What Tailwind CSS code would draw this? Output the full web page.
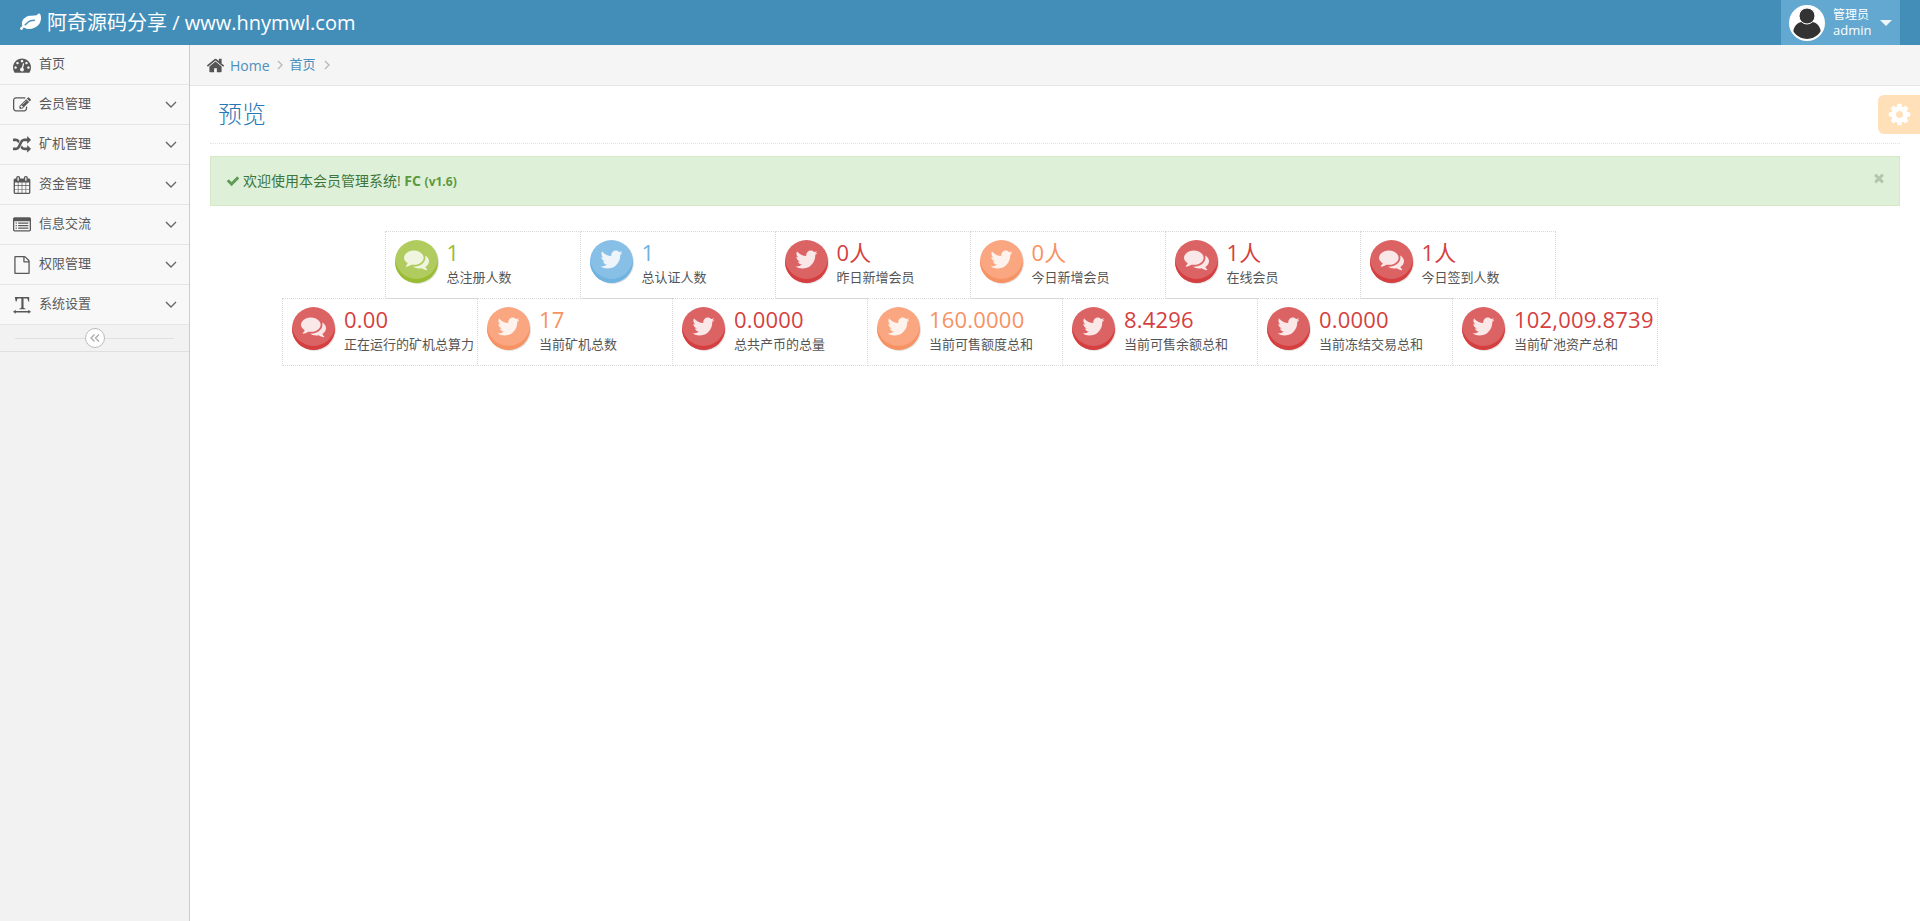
<!DOCTYPE html>
<html lang="zh">
<head>
<meta charset="utf-8">
<title>预览</title>
<script src="https://cdn.jsdelivr.net/npm/@tailwindcss/browser@4"></script>
</head>
<body class="font-['Open_Sans','Noto_Sans_CJK_SC',sans-serif] text-[13px] text-[#393939] bg-white">
<svg class="hidden" xmlns="http://www.w3.org/2000/svg">
<defs>
<symbol id="twitter" viewBox="0 0 1792 1792"><path fill="currentColor" d="M1684 408q-67 98-162 167 1 14 1 42 0 130-38 259.500t-115.500 248.500-184.500 210.500-258 146-323 54.500q-271 0-496-145 35 4 78 4 225 0 401-138-105-2-188-64.500t-114-159.500q33 5 61 5 43 0 85-11-112-23-185.500-111.500t-73.500-205.500v-4q68 38 146 41-66-44-105-115t-39-154q0-88 44-163 121 149 294.500 238.500t371.500 99.500q-8-38-8-74 0-134 94.500-228.500t228.500-94.500q140 0 236 102 109-21 205-78-37 115-142 178 92-10 184-50z"/></symbol>
<symbol id="comments" viewBox="0 0 1792 1792"><path fill="currentColor" d="M1408 768q0 139-94 257t-256.500 186.500-353.500 68.500q-86 0-176-16-124 88-278 128-36 9-86 16h-3q-11 0-20.500-8t-11.500-21q-1-3-1-6.500t.5-6.500 2-6l2.500-5 3.500-5.500 4-5 4.500-5 4-4.500q5-6 23-25t26-29.500 22.500-29 25-38.500 20.500-44q-124-72-195-177t-71-224q0-139 94-257t256.500-186.500 353.500-68.500 353.500 68.500 256.500 186.500 94 257zm384 256q0 120-71 224.500t-195 176.500q10 24 20.500 44t25 38.500 22.500 29 26 29.500 23 25q1 1 4 4.500t4.500 5 4 5 3.500 5.500l2.500 5 2 6 .5 6.500-1 6.500q-3 14-13 22t-22 7q-50-7-86-16-154-40-278-128-90 16-176 16-271 0-472-132 58 4 88 4 161 0 309-45t264-129q125-92 192-212t67-254q0-77-23-152 129 71 204 178t75 230z"/></symbol>
<symbol id="home" viewBox="0 0 1792 1792"><path fill="currentColor" d="M1472 992v480q0 26-19 45t-45 19h-384v-384h-256v384h-384q-26 0-45-19t-19-45v-480q0-1 .5-3t.5-3l575-474 575 474q1 2 1 6zm223-69l-62 74q-8 9-21 11h-3q-13 0-21-7l-692-577-692 577q-12 8-24 7-13-2-21-11l-62-74q-8-10-7-23.500t11-21.500l719-599q32-26 76-26t76 26l244 204v-195q0-14 9-23t23-9h192q14 0 23 9t9 23v408l219 182q10 8 11 21.500t-7 23.500z"/></symbol>
<symbol id="dash" viewBox="0 0 1792 1792"><path fill="currentColor" d="M384 1152q0-53-37.500-90.500t-90.500-37.500-90.500 37.500-37.500 90.500 37.500 90.500 90.500 37.500 90.500-37.500 37.500-90.500zm192-448q0-53-37.500-90.500t-90.500-37.500-90.500 37.500-37.500 90.500 37.500 90.500 90.500 37.500 90.500-37.500 37.500-90.500zm428 481l101-382q6-26-7.500-48.500t-38.500-29.500-48 6.500-30 39.500l-101 382q-60 5-107 43.500t-63 98.500q-20 77 20 146t117 89 146-20 89-117q16-60-6-117t-72-91zm660-33q0-53-37.500-90.500t-90.500-37.500-90.500 37.500-37.500 90.500 37.500 90.500 90.500 37.500 90.500-37.500 37.500-90.500zm-640-640q0-53-37.500-90.500t-90.500-37.500-90.500 37.500-37.500 90.500 37.500 90.500 90.500 37.500 90.500-37.500 37.500-90.500zm448 192q0-53-37.500-90.500t-90.500-37.500-90.500 37.500-37.500 90.500 37.500 90.500 90.500 37.500 90.500-37.500 37.500-90.500zm320 448q0 261-141 483-19 29-54 29h-1402q-35 0-54-29-141-221-141-483 0-182 71-348t191-286 286-191 348-71 348 71 286 191 191 286 71 348z"/></symbol>
<symbol id="cog" viewBox="0 0 1792 1792"><path fill="currentColor" d="M1152 896q0-106-75-181t-181-75-181 75-75 181 75 181 181 75 181-75 75-181zm512-109v222q0 12-8 23t-20 13l-185 28q-19 54-39 91 35 50 107 138 10 12 10 25t-9 23q-27 37-99 108t-94 71q-12 0-26-9l-138-108q-44 23-91 38-16 136-29 186-7 28-36 28h-222q-14 0-24.500-8.500t-11.500-21.500l-28-184q-49-16-90-37l-141 107q-10 9-25 9-14 0-25-11-126-114-165-168-7-10-7-23 0-12 8-23 15-21 51-66.500t54-70.500q-27-50-41-99l-183-27q-13-2-21-12.500t-8-23.500v-222q0-12 8-23t19-13l186-28q14-46 39-92-40-57-107-138-10-12-10-24 0-10 9-23 26-36 98.500-107.500t94.500-71.500q13 0 26 10l138 107q44-23 91-38 16-136 29-186 7-28 36-28h222q14 0 24.500 8.500t11.500 21.500l28 184q49 16 90 37l142-107q9-9 24-9 13 0 25 10 129 119 165 170 7 8 7 22 0 12-8 23-15 21-51 66.500t-54 70.500q26 50 41 98l183 28q13 2 21 12.500t8 23.500z"/></symbol>
<symbol id="check" viewBox="0 0 1792 1792"><path fill="currentColor" d="M1671 566q0 40-28 68l-724 724-136 136q-28 28-68 28t-68-28l-136-136-362-362q-28-28-28-68t28-68l136-136q28-28 68-28t68 28l294 295 656-657q28-28 68-28t68 28l136 136q28 28 28 68z"/></symbol>
<symbol id="times" viewBox="0 0 1792 1792"><path fill="currentColor" d="M1490 1322q0 40-28 68l-136 136q-28 28-68 28t-68-28l-294-294-294 294q-28 28-68 28t-68-28l-136-136q-28-28-28-68t28-68l294-294-294-294q-28-28-28-68t28-68l136-136q28-28 68-28t68 28l294 294 294-294q28-28 68-28t68 28l136 136q28 28 28 68t-28 68l-294 294 294 294q28 28 28 68z"/></symbol>
<symbol id="random" viewBox="0 0 1792 1792"><path fill="currentColor" d="M666 481q-60 92-137 273-22-45-37-72.500t-40.500-63.500-51-56.500-63-35-81.500-14.500h-224q-14 0-23-9t-9-23v-192q0-14 9-23t23-9h224q250 0 410 225zm1126 799q0 14-9 23l-320 320q-9 9-23 9-13 0-22.500-9.500t-9.500-22.500v-192q-32 0-85 .5t-81 1-73-1-71-5-64-10.500-63-18.500-58-28.500-59-40-55-53.500-56-69.500q59-93 136-273 22 45 37 72.500t40.500 63.500 51 56.500 63 35 81.500 14.500h256v-192q0-14 9-23t23-9q12 0 24 10l319 319q9 9 9 23zm0-896q0 14-9 23l-320 320q-9 9-23 9-13 0-22.500-9.500t-9.500-22.500v-192h-256q-48 0-87 15t-69 45-51 61.500-45 77.500q-32 62-78 171-29 66-49.500 111t-54 105-64 100-74 83-90 68.500-106.500 42-128 16.500h-224q-14 0-23-9t-9-23v-192q0-14 9-23t23-9h224q48 0 87-15t69-45 51-61.500 45-77.500q32-62 78-171 29-66 49.500-111t54-105 64-100 74-83 90-68.500 106.500-42 128-16.500h256v-192q0-14 9-23t23-9q12 0 24 10l319 319q9 9 9 23z"/></symbol>
<symbol id="leaf" viewBox="0 0 1792 1792"><path fill="currentColor" d="M1280 704q0-26-19-45t-45-19q-172 0-318 49.500t-259.500 134-235.500 219.500q-19 21-19 45 0 26 19 45t45 19q24 0 45-19 27-24 74-71t67-66q137-124 268.500-176t313.500-52q26 0 45-19t19-45zm512-198q0 95-20 193-46 224-184.500 383t-357.500 268q-214 108-438 108-148 0-286-47-15-5-88-42t-96-37q-16 0-39.500 32t-45 70-52.500 70-60 32q-30 0-51-11t-31-24-27-42q-2-4-6-11t-5.500-10-3-9.500-1.500-13.500q0-35 31-73.500t68-65.500 68-56 31-48q0-4-14-38t-16-44q-9-51-9-104 0-115 43.500-220t119-184.500 170.500-139 204-95.500q55-18 145-25.500t179.500-9 178.500-6 163.500-24 113.500-56.500l29.500-29.500 29.500-28 27-20 36.500-16 43.500-4.500q39 0 70.500 46t47.500 112 24 124 8 96z"/></symbol>
<symbol id="edit" viewBox="0 0 1792 1792"><path fill="currentColor" d="M888 1184l116-116-152-152-116 116v56h96v96h56zm440-720q-16-16-33 1l-350 350q-17 17-1 33t33-1l350-350q17-17 1-33zm80 594v190q0 119-84.500 203.500t-203.500 84.500h-832q-119 0-203.500-84.500t-84.500-203.500v-832q0-119 84.500-203.500t203.500-84.500h832q63 0 117 25 15 7 18 23 3 17-9 29l-49 49q-14 14-32 8-23-6-45-6h-832q-66 0-113 47t-47 113v832q0 66 47 113t113 47h832q66 0 113-47t47-113v-126q0-13 9-22l64-64q15-15 35-7t20 29zm-96-738l288 288-672 672h-288v-288zm444 132l-92 92-288-288 92-92q28-28 68-28t68 28l152 152q28 28 28 68t-28 68z"/></symbol>
<symbol id="calendar" viewBox="0 0 1792 1792"><path fill="currentColor" d="M192 1664h288v-288h-288v288zm352 0h320v-288h-320v288zm-352-352h288v-320h-288v320zm352 0h320v-320h-320v320zm-352-384h288v-288h-288v288zm736 736h320v-288h-320v288zm-384-736h320v-288h-320v288zm768 736h288v-288h-288v288zm-384-352h320v-320h-320v320zm-352-864v-288q0-13-9.500-22.500t-22.500-9.500h-64q-13 0-22.500 9.500t-9.500 22.500v288q0 13 9.500 22.500t22.500 9.500h64q13 0 22.500-9.500t9.500-22.500zm736 864h288v-320h-288v320zm-384-384h320v-288h-320v288zm384 0h288v-288h-288v288zm32-480v-288q0-13-9.500-22.500t-22.500-9.500h-64q-13 0-22.500 9.500t-9.500 22.500v288q0 13 9.500 22.500t22.500 9.500h64q13 0 22.500-9.500t9.500-22.500zm384-64v1280q0 52-38 90t-90 38h-1408q-52 0-90-38t-38-90v-1280q0-52 38-90t90-38h128v-96q0-66 47-113t113-47h64q66 0 113 47t47 113v96h384v-96q0-66 47-113t113-47h64q66 0 113 47t47 113v96h128q52 0 90 38t38 90z"/></symbol>
<symbol id="listalt" viewBox="0 0 1792 1792"><path fill="currentColor" d="M384 1184v64q0 13-9.500 22.500t-22.500 9.500h-64q-13 0-22.500-9.500t-9.500-22.500v-64q0-13 9.500-22.500t22.500-9.500h64q13 0 22.500 9.500t9.500 22.500zm0-256v64q0 13-9.500 22.500t-22.500 9.500h-64q-13 0-22.500-9.500t-9.500-22.500v-64q0-13 9.500-22.500t22.500-9.500h64q13 0 22.500 9.500t9.500 22.500zm0-256v64q0 13-9.500 22.500t-22.500 9.500h-64q-13 0-22.500-9.500t-9.500-22.500v-64q0-13 9.500-22.500t22.500-9.500h64q13 0 22.500 9.500t9.500 22.500zm1152 512v64q0 13-9.500 22.500t-22.500 9.500h-960q-13 0-22.500-9.500t-9.500-22.500v-64q0-13 9.500-22.500t22.500-9.500h960q13 0 22.500 9.500t9.500 22.500zm0-256v64q0 13-9.500 22.500t-22.500 9.500h-960q-13 0-22.500-9.500t-9.500-22.500v-64q0-13 9.500-22.500t22.500-9.500h960q13 0 22.500 9.500t9.500 22.500zm0-256v64q0 13-9.500 22.500t-22.500 9.500h-960q-13 0-22.500-9.500t-9.500-22.500v-64q0-13 9.500-22.500t22.500-9.500h960q13 0 22.500 9.500t9.500 22.500zm128 704v-832q0-13-9.500-22.500t-22.500-9.500h-1472q-13 0-22.500 9.500t-9.500 22.500v832q0 13 9.500 22.500t22.500 9.500h1472q13 0 22.500-9.500t9.500-22.500zm128-1088v1088q0 66-47 113t-113 47h-1472q-66 0-113-47t-47-113v-1088q0-66 47-113t113-47h1472q66 0 113 47t47 113z"/></symbol>
<symbol id="file" viewBox="0 0 1792 1792"><path fill="currentColor" d="M1596 380q28 28 48 76t20 88v1152q0 40-28 68t-68 28h-1344q-40 0-68-28t-28-68v-1600q0-40 28-68t68-28h896q40 0 88 20t76 48zm-444-244v376h376q-10-29-22-41l-313-313q-12-12-41-22zm384 1528v-1024h-416q-40 0-68-28t-28-68v-416h-768v1536h1280z"/></symbol>
<symbol id="textw" viewBox="0 0 20 20"><path fill="currentColor" d="M2 1h16v5h-1l-.8-2.700q-.3-.6-1-.6h-3.500v9.800q0 .8.8 1l1.300.3v.8H7.200v-.8l1.300-.3q.8-.2.8-1V2.700H5.800q-.7 0-1 .6L4 6H3zM0 17.500l3-2.300v1.600h14v-1.600l3 2.300-3 2.300v-1.600H3v1.600z"/></symbol>
<symbol id="chev" viewBox="0 0 12 8"><path fill="none" stroke="currentColor" stroke-width="1.400" d="M1 1l5 5 5-5"/></symbol>
<symbol id="crumb" viewBox="0 0 6 10"><path fill="none" stroke="currentColor" stroke-width="1.200" d="M1 1l4 4-4 4"/></symbol>
</defs>
</svg>

<div class="flex h-screen flex-col overflow-hidden">
  <header class="flex h-[45px] flex-none items-center justify-between bg-[#438eb9] pr-5 text-white">
    <div class="flex items-center pl-5 text-[20px]">
      <svg class="mr-[6px] h-[21px] w-[21px]"><use href="#leaf"/></svg>
      <span>阿奇源码分享 / www.hnymwl.com</span>
    </div>
    <div class="flex h-[45px] w-[119px] items-center bg-[#62a8d1] pl-2">
      <div class="flex h-9 w-9 flex-none items-end justify-center overflow-hidden rounded-full border-2 border-white bg-white">
        <svg viewBox="0 0 32 32" class="h-8 w-8"><path fill="#333" d="M2 27c0-8 5-12 9-12h10c4 0 9 4 9 12 0 2-6 5-14 5S2 29 2 27z"/><circle cx="16" cy="9" r="8" fill="#333" stroke="#fff" stroke-width="1"/></svg>
      </div>
      <div class="ml-2 flex flex-col">
        <span class="text-[12px] leading-[15px]">管理员</span>
        <span class="text-[13px] leading-[16px]">admin</span>
      </div>
      <div class="ml-[9px] h-0 w-0 border-x-[6px] border-t-[6px] border-x-transparent border-t-white/90"></div>
    </div>
  </header>

  <div class="flex min-h-0 flex-1">
    <aside class="flex w-[190px] flex-none flex-col border-r border-[#ccc] bg-[#f2f2f2] text-[#585858]">
      <nav class="flex flex-col">
        <a class="flex h-10 items-center border-b border-[#e5e5e5] bg-[#f8f8f8] pl-[13px] pr-[12px]"><svg class="h-[18px] w-[18px] flex-none"><use href="#dash"/></svg><span class="-mt-px ml-2 flex-1">首页</span></a>
        <a class="flex h-10 items-center border-b border-[#e5e5e5] bg-[#f8f8f8] pl-[13px] pr-[12px]"><svg class="h-[18px] w-[18px] flex-none"><use href="#edit"/></svg><span class="-mt-px ml-2 flex-1">会员管理</span><svg class="h-2 w-3 text-[#666]"><use href="#chev"/></svg></a>
        <a class="flex h-10 items-center border-b border-[#e5e5e5] bg-[#f8f8f8] pl-[13px] pr-[12px]"><svg class="h-[18px] w-[18px] flex-none"><use href="#random"/></svg><span class="-mt-px ml-2 flex-1">矿机管理</span><svg class="h-2 w-3 text-[#666]"><use href="#chev"/></svg></a>
        <a class="flex h-10 items-center border-b border-[#e5e5e5] bg-[#f8f8f8] pl-[13px] pr-[12px]"><svg class="h-[18px] w-[18px] flex-none"><use href="#calendar"/></svg><span class="-mt-px ml-2 flex-1">资金管理</span><svg class="h-2 w-3 text-[#666]"><use href="#chev"/></svg></a>
        <a class="flex h-10 items-center border-b border-[#e5e5e5] bg-[#f8f8f8] pl-[13px] pr-[12px]"><svg class="h-[18px] w-[18px] flex-none"><use href="#listalt"/></svg><span class="-mt-px ml-2 flex-1">信息交流</span><svg class="h-2 w-3 text-[#666]"><use href="#chev"/></svg></a>
        <a class="flex h-10 items-center border-b border-[#e5e5e5] bg-[#f8f8f8] pl-[13px] pr-[12px]"><svg class="h-[18px] w-[18px] flex-none"><use href="#file"/></svg><span class="-mt-px ml-2 flex-1">权限管理</span><svg class="h-2 w-3 text-[#666]"><use href="#chev"/></svg></a>
        <a class="flex h-10 items-center border-b border-[#e5e5e5] bg-[#f8f8f8] pl-[13px] pr-[12px]"><svg class="h-[18px] w-[18px] flex-none"><use href="#textw"/></svg><span class="-mt-px ml-2 flex-1">系统设置</span><svg class="h-2 w-3 text-[#666]"><use href="#chev"/></svg></a>
      </nav>
      <div class="relative flex h-[27px] items-center border-b border-[#e0e0e0] px-[15px]">
        <div class="h-px flex-1 bg-[#e0e0e0]"></div>
        <div class="absolute left-[85px] top-[3px] flex h-5 w-5 items-center justify-center rounded-full border border-[#bbb] bg-white text-[#aaa]">
          <svg viewBox="0 0 10 10" class="h-[10px] w-[10px]"><path fill="none" stroke="currentColor" stroke-width="1.300" d="M4.500 1.500L1 5l3.500 3.500M9 1.500L5.500 5 9 8.500"/></svg>
        </div>
      </div>
    </aside>

    <main class="relative min-w-0 flex-1">
      <div class="flex h-[41px] items-center border-b border-[#e5e5e5] bg-[#f5f5f5] pl-[16px] text-[#4c8fbd]">
        <svg class="h-[19px] w-[19px] text-[#555]"><use href="#home"/></svg>
        <span class="ml-[5px] text-[14px]">Home</span>
        <svg class="ml-[7px] h-[10px] w-[6px] text-[#b2b6bf]"><use href="#crumb"/></svg>
        <span class="ml-[7px]">首页</span>
        <svg class="ml-[8px] h-[10px] w-[6px] text-[#b2b6bf]"><use href="#crumb"/></svg>
      </div>

      <div class="mx-5 flex h-[58px] items-center border-b border-dotted border-[#e2e2e2] pl-2">
        <h1 class="-mt-px text-[24px] font-light leading-none text-[#2679b5]">预览</h1>
      </div>

      <div class="absolute right-0 top-[50px] flex h-[39px] w-[42px] items-center justify-center rounded-l-md bg-[#ffe0b8]">
        <svg class="h-[25px] w-[25px] text-white"><use href="#cog"/></svg>
      </div>

      <div class="relative mx-5 mt-3 flex h-[50px] items-center border border-[#d6e9c6] bg-[#dff0d8] pl-[15px] text-[14px] text-[#3c763d]">
        <svg class="mr-[3px] h-[14px] w-[14px] text-[#629b58]"><use href="#check"/></svg>
        <p class="-mt-px">欢迎使用本会员管理系统! <strong class="text-[14px] font-bold text-[#5b9a3f]">FC</strong> <small class="text-[12px] font-bold text-[#5b9a3f]">(v1.6)</small></p>
        <svg class="absolute right-[13px] top-[14px] h-[14px] w-[14px] text-[#b4c7ae]"><use href="#times"/></svg>
      </div>

      <div class="mt-[25px] flex w-[1560px] flex-col items-center">
        <div class="flex">
          <div class="flex h-[68px] w-[196px] flex-none items-start border border-dotted border-[#d8d8d8] pl-[9px] pt-2">
            <div class="flex h-[43px] w-[43px] flex-none items-center justify-center rounded-full bg-[#b0cc5e] text-white/80 shadow-[inset_0_-4px_0_#9abc32,1px_1px_0_rgba(0,0,0,0.12)]"><svg class="-mt-[4px] h-[25px] w-[25px]"><use href="#comments"/></svg></div>
            <div class="-mt-px ml-[9px] flex flex-col"><span class="text-[22px] leading-[26px] tracking-[0.2px] text-[#9abc32]">1</span><span class="mt-[3px] text-[13px] leading-[18px] text-[#555]">总注册人数</span></div>
          </div>
          <div class="-ml-px flex h-[68px] w-[196px] flex-none items-start border border-dotted border-[#d8d8d8] pl-[9px] pt-2">
            <div class="flex h-[43px] w-[43px] flex-none items-center justify-center rounded-full bg-[#88bfe6] text-white/85 shadow-[inset_0_-4px_0_#6fb3e0,1px_1px_0_rgba(0,0,0,0.12)]"><svg class="-mt-[5px] h-[25px] w-[25px]"><use href="#twitter"/></svg></div>
            <div class="-mt-px ml-[9px] flex flex-col"><span class="text-[22px] leading-[26px] tracking-[0.2px] text-[#6fb3e0]">1</span><span class="mt-[3px] text-[13px] leading-[18px] text-[#555]">总认证人数</span></div>
          </div>
          <div class="-ml-px flex h-[68px] w-[196px] flex-none items-start border border-dotted border-[#d8d8d8] pl-[9px] pt-2">
            <div class="flex h-[43px] w-[43px] flex-none items-center justify-center rounded-full bg-[#dc6364] text-white/85 shadow-[inset_0_-4px_0_#d53f40,1px_1px_0_rgba(0,0,0,0.12)]"><svg class="-mt-[5px] h-[25px] w-[25px]"><use href="#twitter"/></svg></div>
            <div class="-mt-px ml-[9px] flex flex-col"><span class="text-[22px] leading-[26px] tracking-[0.2px] text-[#d53f40]">0人</span><span class="mt-[3px] text-[13px] leading-[18px] text-[#555]">昨日新增会员</span></div>
          </div>
          <div class="-ml-px flex h-[68px] w-[196px] flex-none items-start border border-dotted border-[#d8d8d8] pl-[9px] pt-2">
            <div class="flex h-[43px] w-[43px] flex-none items-center justify-center rounded-full bg-[#f9a681] text-white/85 shadow-[inset_0_-4px_0_#f79263,1px_1px_0_rgba(0,0,0,0.12)]"><svg class="-mt-[5px] h-[25px] w-[25px]"><use href="#twitter"/></svg></div>
            <div class="-mt-px ml-[9px] flex flex-col"><span class="text-[22px] leading-[26px] tracking-[0.2px] text-[#f79263]">0人</span><span class="mt-[3px] text-[13px] leading-[18px] text-[#555]">今日新增会员</span></div>
          </div>
          <div class="-ml-px flex h-[68px] w-[196px] flex-none items-start border border-dotted border-[#d8d8d8] pl-[9px] pt-2">
            <div class="flex h-[43px] w-[43px] flex-none items-center justify-center rounded-full bg-[#dc6364] text-white/85 shadow-[inset_0_-4px_0_#d53f40,1px_1px_0_rgba(0,0,0,0.12)]"><svg class="-mt-[4px] h-[25px] w-[25px]"><use href="#comments"/></svg></div>
            <div class="-mt-px ml-[9px] flex flex-col"><span class="text-[22px] leading-[26px] tracking-[0.2px] text-[#d53f40]">1人</span><span class="mt-[3px] text-[13px] leading-[18px] text-[#555]">在线会员</span></div>
          </div>
          <div class="-ml-px flex h-[68px] w-[196px] flex-none items-start border border-dotted border-[#d8d8d8] pl-[9px] pt-2">
            <div class="flex h-[43px] w-[43px] flex-none items-center justify-center rounded-full bg-[#dc6364] text-white/85 shadow-[inset_0_-4px_0_#d53f40,1px_1px_0_rgba(0,0,0,0.12)]"><svg class="-mt-[4px] h-[25px] w-[25px]"><use href="#comments"/></svg></div>
            <div class="-mt-px ml-[9px] flex flex-col"><span class="text-[22px] leading-[26px] tracking-[0.2px] text-[#d53f40]">1人</span><span class="mt-[3px] text-[13px] leading-[18px] text-[#555]">今日签到人数</span></div>
          </div>
        </div>
        <div class="-mt-px flex">
          <div class="flex h-[68px] w-[196px] flex-none items-start border border-dotted border-[#d8d8d8] pl-[9px] pt-2">
            <div class="flex h-[43px] w-[43px] flex-none items-center justify-center rounded-full bg-[#dc6364] text-white/85 shadow-[inset_0_-4px_0_#d53f40,1px_1px_0_rgba(0,0,0,0.12)]"><svg class="-mt-[4px] h-[25px] w-[25px]"><use href="#comments"/></svg></div>
            <div class="-mt-px ml-[9px] flex flex-col"><span class="text-[22px] leading-[26px] tracking-[0.2px] text-[#d53f40]">0.00</span><span class="mt-[3px] whitespace-nowrap text-[13px] leading-[18px] text-[#555]">正在运行的矿机总算力</span></div>
          </div>
          <div class="-ml-px flex h-[68px] w-[196px] flex-none items-start border border-dotted border-[#d8d8d8] pl-[9px] pt-2">
            <div class="flex h-[43px] w-[43px] flex-none items-center justify-center rounded-full bg-[#f9a681] text-white/85 shadow-[inset_0_-4px_0_#f79263,1px_1px_0_rgba(0,0,0,0.12)]"><svg class="-mt-[5px] h-[25px] w-[25px]"><use href="#twitter"/></svg></div>
            <div class="-mt-px ml-[9px] flex flex-col"><span class="text-[22px] leading-[26px] tracking-[0.2px] text-[#f79263]">17</span><span class="mt-[3px] text-[13px] leading-[18px] text-[#555]">当前矿机总数</span></div>
          </div>
          <div class="-ml-px flex h-[68px] w-[196px] flex-none items-start border border-dotted border-[#d8d8d8] pl-[9px] pt-2">
            <div class="flex h-[43px] w-[43px] flex-none items-center justify-center rounded-full bg-[#dc6364] text-white/85 shadow-[inset_0_-4px_0_#d53f40,1px_1px_0_rgba(0,0,0,0.12)]"><svg class="-mt-[5px] h-[25px] w-[25px]"><use href="#twitter"/></svg></div>
            <div class="-mt-px ml-[9px] flex flex-col"><span class="text-[22px] leading-[26px] tracking-[0.2px] text-[#d53f40]">0.0000</span><span class="mt-[3px] text-[13px] leading-[18px] text-[#555]">总共产币的总量</span></div>
          </div>
          <div class="-ml-px flex h-[68px] w-[196px] flex-none items-start border border-dotted border-[#d8d8d8] pl-[9px] pt-2">
            <div class="flex h-[43px] w-[43px] flex-none items-center justify-center rounded-full bg-[#f9a681] text-white/85 shadow-[inset_0_-4px_0_#f79263,1px_1px_0_rgba(0,0,0,0.12)]"><svg class="-mt-[5px] h-[25px] w-[25px]"><use href="#twitter"/></svg></div>
            <div class="-mt-px ml-[9px] flex flex-col"><span class="text-[22px] leading-[26px] tracking-[0.2px] text-[#f79263]">160.0000</span><span class="mt-[3px] text-[13px] leading-[18px] text-[#555]">当前可售额度总和</span></div>
          </div>
          <div class="-ml-px flex h-[68px] w-[196px] flex-none items-start border border-dotted border-[#d8d8d8] pl-[9px] pt-2">
            <div class="flex h-[43px] w-[43px] flex-none items-center justify-center rounded-full bg-[#dc6364] text-white/85 shadow-[inset_0_-4px_0_#d53f40,1px_1px_0_rgba(0,0,0,0.12)]"><svg class="-mt-[5px] h-[25px] w-[25px]"><use href="#twitter"/></svg></div>
            <div class="-mt-px ml-[9px] flex flex-col"><span class="text-[22px] leading-[26px] tracking-[0.2px] text-[#d53f40]">8.4296</span><span class="mt-[3px] text-[13px] leading-[18px] text-[#555]">当前可售余额总和</span></div>
          </div>
          <div class="-ml-px flex h-[68px] w-[196px] flex-none items-start border border-dotted border-[#d8d8d8] pl-[9px] pt-2">
            <div class="flex h-[43px] w-[43px] flex-none items-center justify-center rounded-full bg-[#dc6364] text-white/85 shadow-[inset_0_-4px_0_#d53f40,1px_1px_0_rgba(0,0,0,0.12)]"><svg class="-mt-[5px] h-[25px] w-[25px]"><use href="#twitter"/></svg></div>
            <div class="-mt-px ml-[9px] flex flex-col"><span class="text-[22px] leading-[26px] tracking-[0.2px] text-[#d53f40]">0.0000</span><span class="mt-[3px] text-[13px] leading-[18px] text-[#555]">当前冻结交易总和</span></div>
          </div>
          <div class="-ml-px flex h-[68px] w-[206px] flex-none items-start border border-dotted border-[#d8d8d8] pl-[9px] pt-2">
            <div class="flex h-[43px] w-[43px] flex-none items-center justify-center rounded-full bg-[#dc6364] text-white/85 shadow-[inset_0_-4px_0_#d53f40,1px_1px_0_rgba(0,0,0,0.12)]"><svg class="-mt-[5px] h-[25px] w-[25px]"><use href="#twitter"/></svg></div>
            <div class="-mt-px ml-[9px] flex flex-col"><span class="whitespace-nowrap text-[22px] leading-[26px] tracking-[0.2px] text-[#d53f40]">102,009.8739</span><span class="mt-[3px] text-[13px] leading-[18px] text-[#555]">当前矿池资产总和</span></div>
          </div>
        </div>
      </div>
    </main>
  </div>
</div>
</body>
</html>
